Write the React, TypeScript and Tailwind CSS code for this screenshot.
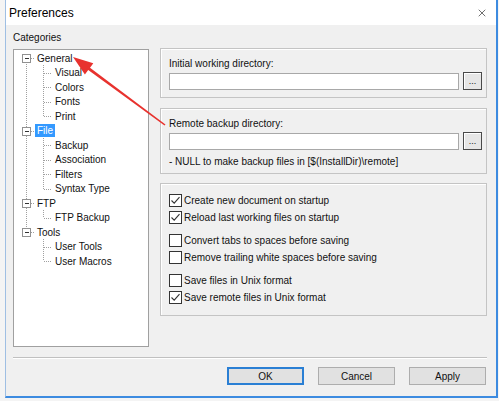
import { X } from 'lucide-react';

type Node = { label: string; level: 0 | 1; selected?: boolean };

const tree: Node[] = [
  { label: 'General', level: 0 },
  { label: 'Visual', level: 1 },
  { label: 'Colors', level: 1 },
  { label: 'Fonts', level: 1 },
  { label: 'Print', level: 1 },
  { label: 'File', level: 0, selected: true },
  { label: 'Backup', level: 1 },
  { label: 'Association', level: 1 },
  { label: 'Filters', level: 1 },
  { label: 'Syntax Type', level: 1 },
  { label: 'FTP', level: 0 },
  { label: 'FTP Backup', level: 1 },
  { label: 'Tools', level: 0 },
  { label: 'User Tools', level: 1 },
  { label: 'User Macros', level: 1 },
];

const ROW = 14.5;
const cy = (i: number) => 8 + ROW * i;

function TreeLines() {
  const roots = tree.map((n, i) => (n.level === 0 ? i : -1)).filter((i) => i >= 0);
  const groups: { parent: number; last: number; kids: number[] }[] = roots.map((r, k) => {
    const end = k + 1 < roots.length ? roots[k + 1] : tree.length;
    const kids = [];
    for (let i = r + 1; i < end; i++) kids.push(i);
    return { parent: r, last: kids[kids.length - 1], kids };
  });
  const dot = { stroke: '#a0a0a0', strokeDasharray: '1 1', strokeWidth: 1, fill: 'none' };
  return (
    <svg className="absolute left-0 top-0 pointer-events-none" width="134" height="240" shapeRendering="crispEdges">
      <line x1="12.5" y1={cy(0)} x2="12.5" y2={cy(roots[roots.length - 1])} {...dot} />
      {groups.map((g) => (
        <g key={g.parent}>
          <line x1="29.5" y1={cy(g.parent) + 7} x2="29.5" y2={cy(g.last)} {...dot} />
          {g.kids.map((k) => (
            <line key={k} x1="30" y1={Math.round(cy(k)) + 0.5} x2="38" y2={Math.round(cy(k)) + 0.5} {...dot} />
          ))}
        </g>
      ))}
      {roots.map((r) => {
        const y = Math.round(cy(r));
        return (
          <g key={r}>
            <line x1="17" y1={y + 0.5} x2="21" y2={y + 0.5} {...dot} />
            <rect x="8.5" y={y - 3.5} width="8" height="8" fill="#fff" stroke="#919191" />
            <line x1="10.5" y1={y + 0.5} x2="15" y2={y + 0.5} stroke="#333" />
          </g>
        );
      })}
    </svg>
  );
}

function Check({ checked, label }: { checked?: boolean; label: string }) {
  return (
    <div className="flex items-center h-[17px]">
      <span className="w-[13px] h-[13px] border border-[#333] bg-white flex items-center justify-center">
        {checked && (
          <svg width="11" height="11" viewBox="0 0 11 11">
            <path d="M1.5 5.5 L4.2 8.2 L9.5 2.2" fill="none" stroke="#333" strokeWidth="1.1" />
          </svg>
        )}
      </span>
      <span className="ml-[2px]">{label}</span>
    </div>
  );
}

function PathRow() {
  return (
    <div className="flex items-center mt-[2px]">
      <div className="flex-1 h-[17px] bg-white border border-[#a8a8a8]" />
      <button className="ml-[4px] w-[19px] h-[18px] border border-[#4a4a4a] bg-[#e6e6e6] shadow-[inset_1px_1px_0_#fff] text-[9px] leading-[14px] flex items-end justify-center pb-[1px]">
        ...
      </button>
    </div>
  );
}

const panel = 'border border-[#c4c4c4] shadow-[inset_1px_1px_0_#fff] pl-[8px] pr-[4px]';

export default function App() {
  return (
    <div className="w-[499px] h-[401px] bg-[#f4f4f4] relative overflow-hidden font-['Liberation_Sans',Arial,sans-serif] text-[10px] leading-[13px] text-[#111]">
      <div className="ml-[5px] w-[493px] h-[398px] flex flex-col border-l border-r-2 border-b-2 border-l-[#9fbfe3] border-r-[#3d8be0] border-b-[#3d8be0] bg-[#f0f0f0]">
        {/* title bar */}
        <div className="h-[25px] bg-white flex items-center justify-between pl-[3px] pr-[8px]">
          <span className="text-[12px] leading-[16px] text-black">Preferences</span>
          <X className="w-[12px] h-[12px] text-[#222]" strokeWidth={1.3} />
        </div>

        <div className="flex-1 flex flex-col pl-[7px] pr-[9px]">
          <div className="flex h-[322px]">
            <div className="w-[136px] pt-[6px] flex flex-col">
              <div>Categories</div>
              <div className="mt-[5px] h-[298px] bg-white border border-[#a0a0a0] relative pt-[1px]">
                <TreeLines />
                {tree.map((n) => (
                  <div key={n.label} className={`h-[14.5px] flex items-center ${n.level === 0 ? 'pl-[21px]' : 'pl-[39px]'}`}>
                    <span className={`px-[2px] ${n.selected ? 'bg-[#3399ff] text-white' : ''}`}>{n.label}</span>
                  </div>
                ))}
              </div>
            </div>

            <div className="w-[327px] ml-[11px] mt-[23px] flex flex-col">
              <div className={`${panel} h-[50px] pt-[8px]`}>
                <div>Initial working directory:</div>
                <PathRow />
              </div>
              <div className={`${panel} h-[66px] mt-[10px] pt-[8px]`}>
                <div>Remote backup directory:</div>
                <PathRow />
                <div className="mt-[5px]">- NULL to make backup files in [$(InstallDir)\remote]</div>
              </div>
              <div className={`${panel} h-[133px] mt-[9px] pt-[8px]`}>
                <Check checked label="Create new document on startup" />
                <Check checked label="Reload last working files on startup" />
                <div className="mt-[6px]">
                  <Check label="Convert tabs to spaces before saving" />
                  <Check label="Remove trailing white spaces before saving" />
                </div>
                <div className="mt-[6px]">
                  <Check label="Save files in Unix format" />
                  <Check checked label="Save remote files in Unix format" />
                </div>
              </div>
            </div>
          </div>

          <div className="mt-[10px] border-t border-t-[#c0c0c0] border-b border-b-white" />

          <div className="mt-[8px] flex justify-end gap-[14px] mr-[1px]">
            <button className="w-[77px] h-[18px] bg-[#e1e1e1] border-2 border-[#2a7fd4]">OK</button>
            <button className="w-[77px] h-[18px] bg-[#e1e1e1] border border-[#adadad]">Cancel</button>
            <button className="w-[77px] h-[18px] bg-[#e1e1e1] border border-[#adadad]">Apply</button>
          </div>
        </div>
      </div>

      {/* red annotation arrow */}
      <svg className="absolute left-0 top-0 pointer-events-none" width="499" height="401">
        <polygon points="73,57 93.3,63.3 90,67.7 165.5,124.4 164.5,125.6 88.2,70.1 84.9,74.5" fill="#e8322e" />
      </svg>
    </div>
  );
}
